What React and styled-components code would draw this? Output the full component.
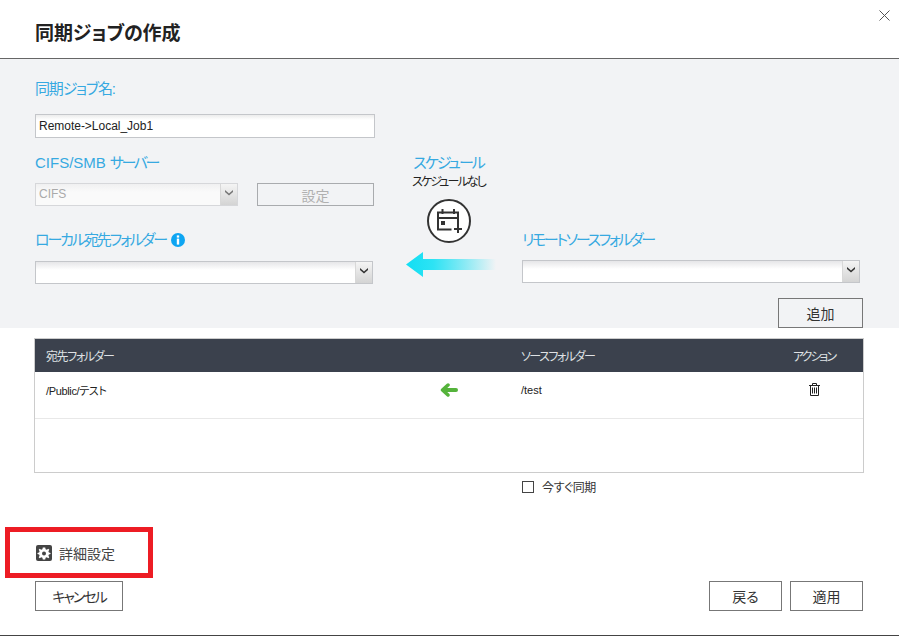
import React from "react";
import styled, { createGlobalStyle } from "styled-components";

const Global = createGlobalStyle`
  html, body { margin: 0; padding: 0; background: #fff; overflow: hidden; }
  * { box-sizing: border-box; }
  body {
    font-family: "Liberation Sans", "Noto Sans CJK JP", sans-serif;
    font-feature-settings: "palt";
  }
`;

const Dialog = styled.div`
  position: relative;
  width: 899px;
  height: 636px;
  background: #fff;
  border-bottom: 1px solid #444;
`;
const Header = styled.header`
  height: 59px;
  padding: 0 35px;
  display: flex;
  align-items: center;
  border-bottom: 1px solid #666;
`;
const Title = styled.h1`
  margin: 9px 0 0;
  font-size: 19px;
  line-height: 24px;
  font-weight: 700;
  letter-spacing: -0.1px;
  color: #222;
`;
const Close = styled.button`
  position: absolute;
  top: 10px;
  right: 9px;
  width: 11px;
  height: 11px;
  padding: 0;
  border: 0;
  background: none;
  display: flex;
`;
const Panel = styled.section`
  height: 269px;
  background: #f2f3f5;
  padding: 0 36px 0 35px;
  display: flex;
`;
const LeftColumn = styled.div`
  width: 340px;
  padding-top: 20px;
  display: flex;
  flex-direction: column;
`;
const CenterColumn = styled.div`
  width: 147px;
  padding-top: 94px;
  display: flex;
  flex-direction: column;
  align-items: center;
`;
const RightColumn = styled.div`
  width: 341px;
  padding-top: 171px;
  display: flex;
  flex-direction: column;
`;
const Label = styled.label`
  display: flex;
  align-items: center;
  gap: 5px;
  height: 20px;
  font-size: 15px;
  line-height: 20px;
  color: #36a9e1;
  white-space: nowrap;
  letter-spacing: ${(p) => p.$spacing || 0}px;
  margin-top: ${(p) => p.$top || 0}px;
  margin-bottom: ${(p) => p.$bottom || 0}px;
`;
const Condensed = styled.span`
  margin-left: 4px;
  letter-spacing: -2.4px;
`;
const TextInput = styled.input`
  width: 340px;
  height: 24px;
  margin-top: 15px;
  padding: 0 4px 0 3px;
  border: 1px solid #c4c6ca;
  background: linear-gradient(#ececec 0, #fff 5px);
  font: 12px "Liberation Sans", sans-serif;
  letter-spacing: -0.02px;
  color: #222;
  outline: none;
`;
const SelectBox = styled.div`
  width: ${(p) => p.$width}px;
  height: 23px;
  margin-top: 10px;
  display: flex;
  border: 1px solid ${(p) => (p.$disabled ? "#d6d7da" : "#c4c6ca")};
  background: ${(p) =>
    p.$disabled
      ? "linear-gradient(#f0f0f1 0, #fafafa 8px)"
      : "linear-gradient(#e6e6e8 0, #fff 8px)"};
`;
const SelectValue = styled.div`
  flex: 1;
  padding-left: 3px;
  font-size: 12px;
  line-height: 20px;
  color: #aaa;
`;
const SelectCaret = styled.div`
  width: 17px;
  display: flex;
  align-items: center;
  justify-content: center;
  padding-bottom: 4px;
  border-left: 1px solid #d8d8d8;
  background: linear-gradient(#f4f4f4, #d4d4d4);
  color: ${(p) => (p.$disabled ? "#777" : "#333")};
`;
const ServerRow = styled.div`
  display: flex;
  align-items: flex-start;
`;
const GhostButton = styled.button`
  width: 117px;
  height: 23px;
  margin: 10px 0 0 19px;
  border: 1px solid #a9abae;
  background: transparent;
  font: inherit;
  font-size: 14px;
  font-feature-settings: "palt";
  color: #b0b0b0;
  padding: 0;
`;
const ScheduleTitle = styled.div`
  height: 20px;
  font-size: 15px;
  line-height: 20px;
  letter-spacing: -2px;
  color: #36a9e1;
`;
const ScheduleNote = styled.div`
  height: 16px;
  margin-top: 1px;
  font-size: 12px;
  line-height: 16px;
  letter-spacing: -1.9px;
  color: #222;
`;
const ScheduleButton = styled.div`
  width: 44px;
  height: 44px;
  margin-top: 9px;
  border: 2px solid #333;
  border-radius: 50%;
  background: #fff;
  display: flex;
  align-items: center;
  justify-content: center;
`;
const TransferArrow = styled.svg`
  display: block;
  width: 90px;
  height: 25px;
  margin: 9px 0 0 5px;
`;
const ButtonRow = styled.div`
  display: flex;
  justify-content: flex-end;
  margin-top: 15px;
`;
const ActionButton = styled.button`
  width: ${(p) => p.$width}px;
  height: 30px;
  padding: 0;
  border: 1px solid #777;
  background: ${(p) => (p.$flat ? "transparent" : "#fff")};
  font: inherit;
  font-size: 14px;
  font-feature-settings: "palt";
  letter-spacing: ${(p) => p.$spacing || 0}px;
  color: #333;
`;
const Table = styled.div`
  width: 830px;
  height: 135px;
  margin: 10px 0 0 34px;
  border: 1px solid #ccc;
`;
const Columns = styled.div`
  display: grid;
  grid-template-columns: 392px 44px 298px 90px;
  align-items: center;
`;
const TableHead = styled(Columns)`
  height: 33px;
  background: #3b414d;
  color: #dfe1e4;
  font-size: 12px;
`;
const TableRow = styled(Columns)`
  height: 47px;
  padding-bottom: 11px;
  border-bottom: 1px solid #e8e8e8;
  color: #222;
  font-size: 11px;
`;
const DestCell = styled.div`
  padding-left: 11px;
  letter-spacing: ${(p) => p.$spacing || 0}px;
`;
const ArrowCell = styled.div`
  display: flex;
  justify-content: center;
`;
const SourceCell = styled.div`
  padding-left: 50px;
  letter-spacing: ${(p) => p.$spacing || 0}px;
`;
const ActionCell = styled.div`
  display: flex;
  justify-content: center;
  letter-spacing: ${(p) => p.$spacing || 0}px;
`;
const SyncRow = styled.label`
  display: flex;
  align-items: center;
  gap: 8px;
  height: 13px;
  margin: 7px 0 0 522px;
  font-size: 12px;
  letter-spacing: -0.4px;
  color: #333;
`;
const CheckBox = styled.span`
  width: 12px;
  height: 12px;
  border: 1px solid #444;
  background: #fff;
`;
const Advanced = styled.div`
  width: 148px;
  height: 51px;
  margin: 34px 0 0 5px;
  padding-left: 26px;
  border: 5px solid #ed1c24;
  display: flex;
  align-items: center;
  gap: 7px;
  font-size: 14px;
  color: #444;
`;
const Footer = styled.footer`
  margin-top: 3px;
  padding: 0 36px 0 35px;
  display: flex;
  justify-content: space-between;
`;
const FooterRight = styled.div`
  display: flex;
  gap: 8px;
`;

const Caret = () => (
  <svg width="10" height="7" viewBox="0 0 10 7">
    <path d="M1 1l4 3.4L9 1v2L5 6.4 1 3z" fill="currentColor" />
  </svg>
);

const Select = ({ width, disabled, value }) => (
  <SelectBox $width={width} $disabled={disabled}>
    <SelectValue>{value}</SelectValue>
    <SelectCaret $disabled={disabled}>
      <Caret />
    </SelectCaret>
  </SelectBox>
);

export default function App() {
  return (
    <Dialog>
      <Global />
      <Header>
        <Title>同期ジョブの作成</Title>
        <Close aria-label="close">
          <svg width="11" height="11" viewBox="0 0 11 11">
            <path d="M.5.5l10 10M10.5.5l-10 10" stroke="#555" strokeWidth="1" fill="none" />
          </svg>
        </Close>
      </Header>
      <Panel>
        <LeftColumn>
          <Label $spacing={-1.2}>同期ジョブ名:</Label>
          <TextInput defaultValue="Remote->Local_Job1" />
          <Label $top={15}>
            <span>
              CIFS/SMB<Condensed>サーバー</Condensed>
            </span>
          </Label>
          <ServerRow>
            <Select width={203} disabled value="CIFS" />
            <GhostButton>設定</GhostButton>
          </ServerRow>
          <Label $top={24} $bottom={1} $spacing={-2.1}>
            ローカル宛先フォルダー
            <svg width="14" height="14" viewBox="0 0 14 14">
              <circle cx="7" cy="7" r="7" fill="#0ea5f2" />
              <rect x="5.8" y="2.4" width="2.4" height="2.2" fill="#fff" />
              <rect x="5.8" y="5.6" width="2.4" height="6" fill="#fff" />
            </svg>
          </Label>
          <Select width={338} />
        </LeftColumn>
        <CenterColumn>
          <ScheduleTitle>スケジュール</ScheduleTitle>
          <ScheduleNote>スケジュールなし</ScheduleNote>
          <ScheduleButton>
            <svg width="26" height="24" viewBox="0 0 26 24" fill="none" stroke="#333" strokeWidth="2">
              <path d="M15.500 20.500H2V3.500h20v13" />
              <path d="M2 9h20" />
              <path d="M6.500 0v5M18 0v5" />
              <rect x="5" y="12" width="4" height="4" fill="#333" stroke="none" />
              <path d="M22 16v8M18 20h8" />
            </svg>
          </ScheduleButton>
          <TransferArrow viewBox="0 0 90 25">
            <defs>
              <linearGradient id="transferFade" x1="0" x2="1" y1="0" y2="0">
                <stop offset="0" stopColor="#12def3" />
                <stop offset="0.3" stopColor="#2de3f4" />
                <stop offset="1" stopColor="#12def3" stopOpacity="0" />
              </linearGradient>
            </defs>
            <path d="M0 12.500L17 0v7h73v11H17v7z" fill="url(#transferFade)" />
          </TransferArrow>
        </CenterColumn>
        <RightColumn>
          <Label $spacing={-2.3}>リモートソースフォルダー</Label>
          <Select width={338} />
          <ButtonRow>
            <ActionButton $width={85} $flat>追加</ActionButton>
          </ButtonRow>
        </RightColumn>
      </Panel>
      <Table>
        <TableHead>
          <DestCell $spacing={-1.4}>宛先フォルダー</DestCell>
          <ArrowCell />
          <SourceCell $spacing={-1.5}>ソースフォルダー</SourceCell>
          <ActionCell $spacing={-2}>アクション</ActionCell>
        </TableHead>
        <TableRow>
          <DestCell $spacing={-0.35}>/Public/テスト</DestCell>
          <ArrowCell>
            <svg width="18" height="14" viewBox="0 0 18 14" fill="none" stroke="#55b33b" strokeLinejoin="round" strokeLinecap="round">
              <path d="M16 7H5" strokeWidth="4" />
              <path d="M8 2L2.500 7 8 12" strokeWidth="3.500" />
            </svg>
          </ArrowCell>
          <SourceCell>/test</SourceCell>
          <ActionCell>
            <svg width="11" height="13" viewBox="0 0 11 13" fill="none" stroke="#222" strokeWidth="1">
              <path d="M0 2.500h11M3.500 2.500V.5h4v2" />
              <path d="M1.500 2.500v10h8v-10" />
              <path d="M3.500 4.500v6M5.500 4.500v6M7.500 4.500v6" />
            </svg>
          </ActionCell>
        </TableRow>
      </Table>
      <SyncRow>
        <CheckBox />
        今すぐ同期
      </SyncRow>
      <Advanced>
        <svg width="16" height="16" viewBox="0 0 16 16">
          <rect width="16" height="16" rx="2" fill="#444" />
          <path
            d="M8 2.500l1.200 0 .4 1.700 1.200.5 1.500-.9 1 1-.9 1.500.5 1.200 1.600.4v1.200l-1.600.4-.5 1.200.9 1.500-1 1-1.500-.9-1.200.5-.4 1.600H6.800l-.4-1.600-1.200-.5-1.500.9-1-1 .9-1.500-.5-1.200-1.600-.4V7.900l1.600-.4.5-1.200-.9-1.500 1-1 1.500.9 1.200-.5.4-1.700z"
            fill="#fff"
          />
          <circle cx="8" cy="8.500" r="2" fill="#444" />
        </svg>
        詳細設定
      </Advanced>
      <Footer>
        <ActionButton $width={88} $spacing={-2}>キャンセル</ActionButton>
        <FooterRight>
          <ActionButton $width={73}>戻る</ActionButton>
          <ActionButton $width={73}>適用</ActionButton>
        </FooterRight>
      </Footer>
    </Dialog>
  );
}
